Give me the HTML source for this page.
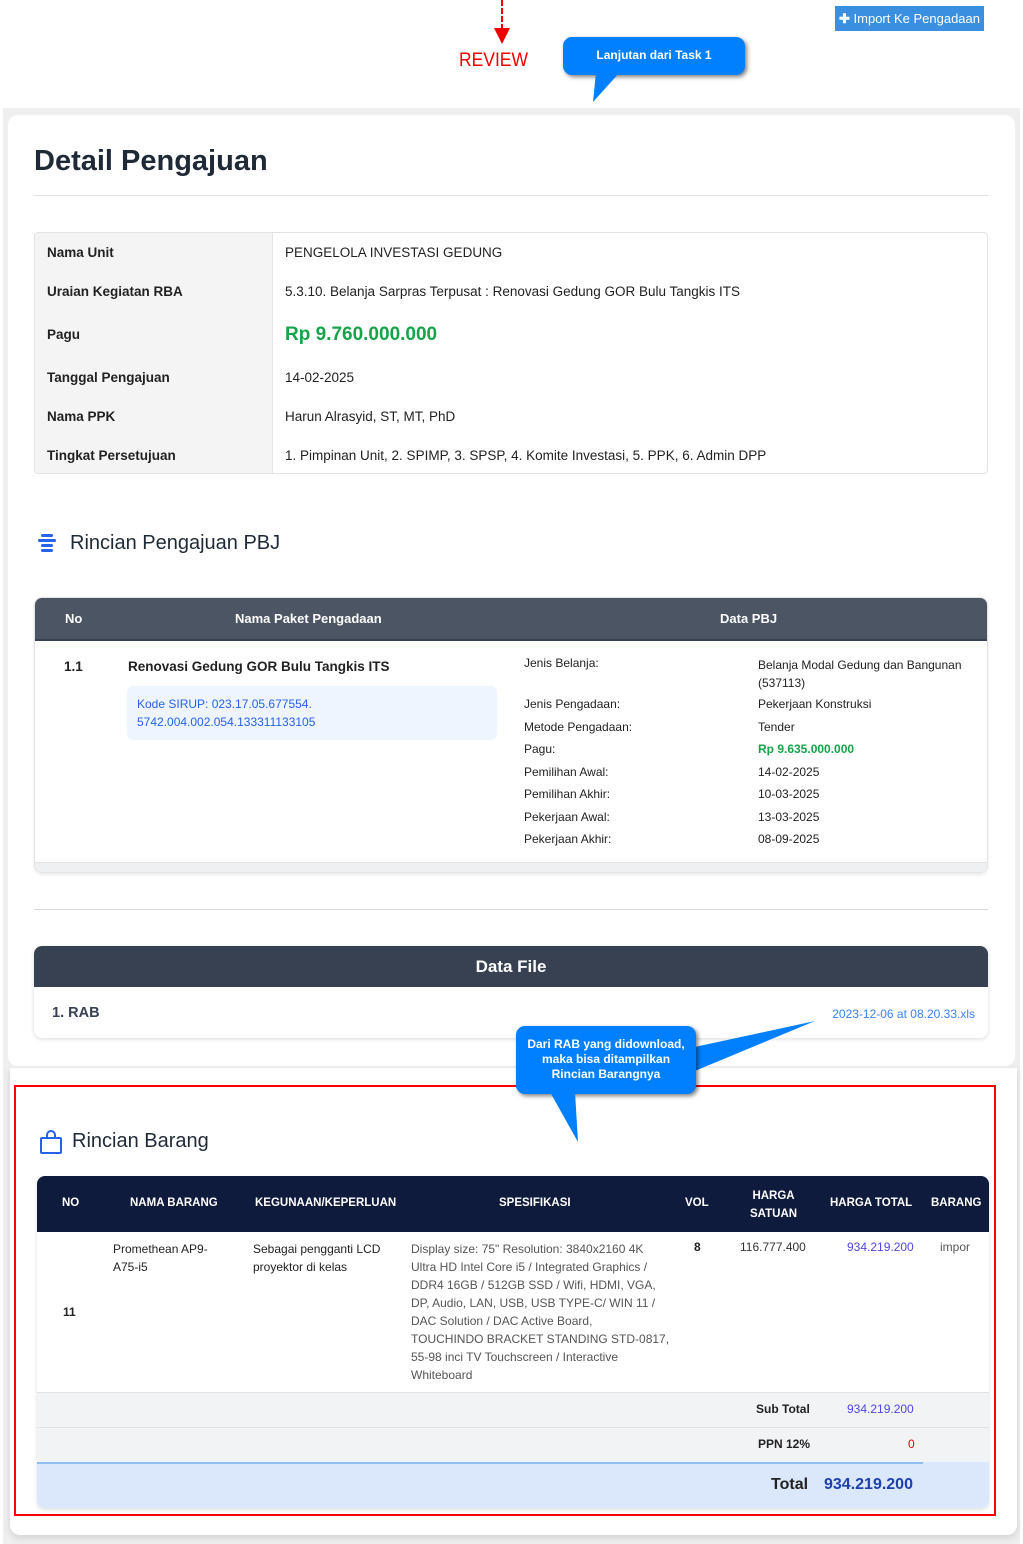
<!DOCTYPE html>
<html><head><meta charset="utf-8"><style>
*{box-sizing:border-box;margin:0;padding:0}
body{width:1023px;height:1544px;position:relative;background:#fff;font-family:"Liberation Sans",sans-serif;color:#222;overflow:hidden}
.a{position:absolute}
.bgray{left:3px;top:108px;width:1017px;height:1436px;background:#efefef}
.card1{left:8px;top:115px;width:1007px;height:951px;background:#fff;border-radius:10px}
.card2{left:10px;top:1068px;width:1007px;height:467px;background:#fff;border-radius:0 0 10px 10px;box-shadow:0 3px 8px rgba(0,0,0,.12)}
.info{left:34px;top:232px;width:954px;height:242px;border:1px solid #e3e3e3;border-radius:4px;overflow:hidden}
.info .r{position:absolute;left:0;width:100%;display:flex;font-size:13.5px}
.info .k{width:238px;background:#f4f4f4;padding-left:12px;font-weight:bold;border-right:1px solid #e3e3e3;height:100%;display:flex;align-items:center}
.info .v{padding-left:12px;display:flex;align-items:center}
.lbl{font-size:12px;position:absolute}
</style></head><body>
<div class="a bgray"></div>
<div class="a card1"></div>
<div class="a card2"></div>

<div class="a" style="left:501px;top:0;width:0;height:30px;border-left:2px dashed #e00"></div>
<div class="a" style="left:494px;top:28px;width:0;height:0;border-left:8px solid transparent;border-right:8px solid transparent;border-top:16px solid #e00"></div>
<div class="a" style="left:459px;top:50px;color:#e00;font-size:19px;transform:scaleX(0.92);transform-origin:left">REVIEW</div>
<div class="a" style="left:563px;top:37px;width:182px;height:38px;background:#0080ff;border-radius:9px;box-shadow:2px 2px 4px rgba(0,0,0,.5);color:#fff;font-weight:bold;font-size:12px;text-align:center;line-height:36px">Lanjutan dari Task 1</div>
<svg class="a" style="left:590px;top:72px" width="40" height="32"><polygon points="6,0 30,0 3,30" fill="#0080ff"/></svg>
<div class="a" style="left:835px;top:6px;width:149px;height:25px;background:#3b8fe0;color:#fff;font-size:13px;line-height:25px;padding-left:4px"><b>✚</b> Import Ke Pengadaan</div>

<div class="a" style="left:34px;top:145px;font-size:29px;font-weight:bold;color:#1f2937">Detail Pengajuan</div>
<div class="a" style="left:34px;top:195px;width:954px;height:1px;background:#e0e0e0"></div>

<div class="a info">
 <div class="r" style="top:0;height:39px"><div class="k">Nama Unit</div><div class="v">PENGELOLA INVESTASI GEDUNG</div></div>
 <div class="r" style="top:39px;height:39px"><div class="k">Uraian Kegiatan RBA</div><div class="v">5.3.10. Belanja Sarpras Terpusat : Renovasi Gedung GOR Bulu Tangkis ITS</div></div>
 <div class="r" style="top:78px;height:47px"><div class="k">Pagu</div><div class="v" style="color:#16a34a;font-weight:bold;font-size:19px">Rp 9.760.000.000</div></div>
 <div class="r" style="top:125px;height:39px"><div class="k">Tanggal Pengajuan</div><div class="v">14-02-2025</div></div>
 <div class="r" style="top:164px;height:39px"><div class="k">Nama PPK</div><div class="v">Harun Alrasyid, ST, MT, PhD</div></div>
 <div class="r" style="top:203px;height:39px"><div class="k">Tingkat Persetujuan</div><div class="v">1. Pimpinan Unit, 2. SPIMP, 3. SPSP, 4. Komite Investasi, 5. PPK, 6. Admin DPP</div></div>
</div>

<svg class="a" style="left:38px;top:534px" width="18" height="18"><rect x="3" y="0" width="12" height="3" rx="1.5" fill="#2563eb"/><rect x="0" y="5" width="18" height="3" rx="1.5" fill="#2563eb"/><rect x="3" y="10" width="12" height="3" rx="1.5" fill="#2563eb"/><rect x="3" y="15" width="12" height="3" rx="1.5" fill="#2563eb"/></svg>
<div class="a" style="left:70px;top:532px;font-size:20px;color:#1f2937">Rincian Pengajuan PBJ</div>

<div class="a" style="left:34px;top:597px;width:954px;height:276px;border:1px solid #e3e3e3;border-radius:8px;overflow:hidden;box-shadow:0 2px 3px rgba(0,0,0,.08)">
 <div class="a" style="left:0;top:0;width:100%;height:43px;background:#4b5563;border-bottom:2px solid #374151"></div>
 <div class="a" style="left:30px;top:13px;color:#fff;font-weight:bold;font-size:13px">No</div>
 <div class="a" style="left:200px;top:13px;color:#fff;font-weight:bold;font-size:13px">Nama Paket Pengadaan</div>
 <div class="a" style="left:685px;top:13px;color:#fff;font-weight:bold;font-size:13px">Data PBJ</div>
 <div class="a" style="left:29px;top:61px;font-weight:bold;font-size:13.5px">1.1</div>
 <div class="a" style="left:93px;top:61px;font-weight:bold;font-size:13.5px">Renovasi Gedung GOR Bulu Tangkis ITS</div>
 <div class="a" style="left:92px;top:88px;width:370px;height:54px;background:#eef5ff;border-radius:6px;color:#2563eb;font-size:12px;padding:9px 10px;line-height:18px">Kode SIRUP: 023.17.05.677554.<br>5742.004.002.054.133311133105</div>
 <div class="lbl" style="left:489px;top:58px">Jenis Belanja:</div>
 <div class="lbl" style="left:489px;top:95px;line-height:22.5px">Jenis Pengadaan:<br>Metode Pengadaan:<br>Pagu:<br>Pemilihan Awal:<br>Pemilihan Akhir:<br>Pekerjaan Awal:<br>Pekerjaan Akhir:</div>
 <div class="lbl" style="left:723px;top:58px;line-height:18px">Belanja Modal Gedung dan Bangunan<br>(537113)</div>
 <div class="lbl" style="left:723px;top:95px;line-height:22.5px">Pekerjaan Konstruksi<br>Tender<br><span style="color:#16a34a;font-weight:bold">Rp 9.635.000.000</span><br>14-02-2025<br>10-03-2025<br>13-03-2025<br>08-09-2025</div>
 <div class="a" style="left:0;top:264px;width:100%;height:12px;border-top:1px solid #e3e3e3;background:#eef0f2"></div>
</div>

<div class="a" style="left:34px;top:909px;width:954px;height:1px;background:#d8d8d8"></div>

<div class="a" style="left:34px;top:946px;width:954px;height:92px;border-radius:8px;background:#fff;box-shadow:0 1px 4px rgba(0,0,0,.15);overflow:hidden">
 <div style="height:41px;background:#374151;color:#fff;font-weight:bold;font-size:17px;text-align:center;line-height:42px">Data File</div>
 <div class="a" style="left:18px;top:59px;font-weight:bold;font-size:14.5px;color:#374151">1. RAB</div>
 <div class="a" style="right:13px;top:61px;font-size:12px;color:#3b82f6">2023-12-06 at 08.20.33.xls</div>
</div>

<div class="a" style="left:14px;top:1085px;width:982px;height:431px;border:2px solid #f00"></div>

<svg class="a" style="left:40px;top:1130px" width="22" height="24" viewBox="0 0 22 24"><path d="M7 8V5a4 4 0 0 1 8 0v3" fill="none" stroke="#2563eb" stroke-width="2"/><rect x="1" y="8" width="20" height="15" rx="1" fill="none" stroke="#2563eb" stroke-width="2"/></svg>
<div class="a" style="left:72px;top:1130px;font-size:20px;color:#1f2937">Rincian Barang</div>

<svg class="a" style="left:550px;top:1018px" width="270" height="125"><polygon points="140,30 265,3 140,55" fill="#0080ff"/></svg>
<div class="a" style="left:516px;top:1026px;width:180px;height:68px;background:#0080ff;border-radius:9px;box-shadow:2px 2px 4px rgba(0,0,0,.5);color:#fff;font-weight:bold;font-size:12px;text-align:center;line-height:15px;padding-top:11px">Dari RAB yang didownload,<br>maka bisa ditampilkan<br>Rincian Barangnya</div>
<svg class="a" style="left:550px;top:1092px" width="40" height="52"><polygon points="0,0 25,0 28,50" fill="#0080ff"/></svg>

<div class="a" style="left:37px;top:1176px;width:952px;height:332px;border-radius:8px;overflow:hidden;background:#fff;box-shadow:0 2px 4px rgba(0,0,0,.12)">
 <div class="a" style="left:0;top:0;width:100%;height:56px;background:#0f1b3d"></div>
 <div class="a" style="left:0;top:216px;width:100%;height:70px;background:#f2f3f5;border-top:1px solid #e2e2e2"></div>
 <div class="a" style="left:0;top:251px;width:100%;height:1px;background:#e2e2e2"></div>
 <div class="a" style="left:0;top:286px;width:100%;height:46px;background:#dbe8fb"></div>
 <div class="a" style="left:0;top:286px;width:886px;height:2px;background:#8fbdf0"></div>
</div>
<div class="a" style="left:37px;top:1176px;width:952px;height:56px;color:#fff;font-weight:bold;font-size:11.5px">
 <div class="a" style="left:25px;top:21px">NO</div>
 <div class="a" style="left:93px;top:21px">NAMA BARANG</div>
 <div class="a" style="left:218px;top:21px">KEGUNAAN/KEPERLUAN</div>
 <div class="a" style="left:462px;top:21px">SPESIFIKASI</div>
 <div class="a" style="left:648px;top:21px">VOL</div>
 <div class="a" style="left:713px;top:11px;text-align:center;line-height:18px">HARGA<br>SATUAN</div>
 <div class="a" style="left:793px;top:21px">HARGA TOTAL</div>
 <div class="a" style="left:894px;top:21px">BARANG</div>
</div>
<div class="a" style="left:63px;top:1305px;font-size:12px;font-weight:bold">11</div>
<div class="a" style="left:113px;top:1240px;font-size:12px;line-height:18px;width:120px">Promethean AP9-<br>A75-i5</div>
<div class="a" style="left:253px;top:1240px;font-size:12px;line-height:18px">Sebagai pengganti LCD<br>proyektor di kelas</div>
<div class="a" style="left:411px;top:1240px;font-size:12px;line-height:18px;color:#555">Display size: 75" Resolution: 3840x2160 4K<br>Ultra HD Intel Core i5 / Integrated Graphics /<br>DDR4 16GB / 512GB SSD / Wifi, HDMI, VGA,<br>DP, Audio, LAN, USB, USB TYPE-C/ WIN 11 /<br>DAC Solution / DAC Active Board,<br>TOUCHINDO BRACKET STANDING STD-0817,<br>55-98 inci TV Touchscreen / Interactive<br>Whiteboard</div>
<div class="a" style="left:694px;top:1240px;font-size:12px;font-weight:bold">8</div>
<div class="a" style="left:740px;top:1240px;font-size:12px;color:#333">116.777.400</div>
<div class="a" style="left:847px;top:1240px;font-size:12px;color:#4f46e5">934.219.200</div>
<div class="a" style="left:940px;top:1240px;font-size:12px;color:#555">impor</div>
<div class="a" style="left:756px;top:1402px;font-size:12px;font-weight:bold">Sub Total</div>
<div class="a" style="left:847px;top:1402px;font-size:12px;color:#4f46e5">934.219.200</div>
<div class="a" style="left:758px;top:1437px;font-size:12px;font-weight:bold">PPN 12%</div>
<div class="a" style="left:908px;top:1437px;font-size:12px;color:#e00">0</div>
<div class="a" style="left:771px;top:1476px;font-size:16px;font-weight:bold">Total</div>
<div class="a" style="left:824px;top:1476px;font-size:16px;font-weight:bold;color:#1e40af">934.219.200</div>
</body></html>
